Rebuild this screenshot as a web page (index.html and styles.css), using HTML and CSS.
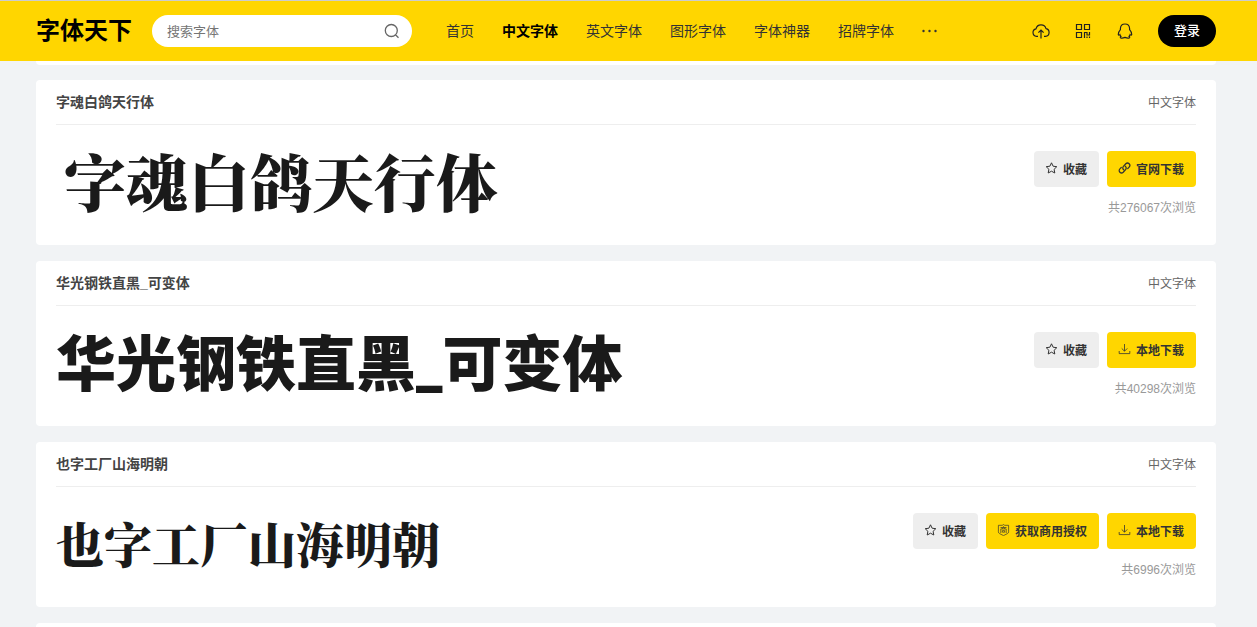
FILE: index.html
```html
<!DOCTYPE html>
<html lang="zh-CN">
<head>
  <meta charset="UTF-8" />
  <meta name="viewport" content="width=device-width, initial-scale=1.0"/>
  <title>中文字体 - 字体天下</title>
  <link rel="stylesheet" href="styles.css">
</head>
<body>

  <svg class="sprite" aria-hidden="true">
    <symbol id="i-star" viewBox="0 0 12 12">
      <path d="M6 .8l1.6 3.4 3.7.5-2.7 2.6.7 3.7L6 9.2 2.7 11l.7-3.7L.7 4.7l3.7-.5z" fill="none" stroke="currentColor" stroke-linejoin="round"/>
    </symbol>
    <symbol id="i-down" viewBox="0 0 12 12">
      <path d="M6 1v7M3.2 5.4L6 8.2l2.8-2.8M.7 8v2.6h10.6V8" fill="none" stroke="currentColor" stroke-width=".8"/>
    </symbol>
    <symbol id="i-link" viewBox="0 0 12 12">
      <g fill="none" stroke="currentColor" stroke-width="1.3" stroke-linecap="round">
        <path d="M5.2 7.8a2.300 2.300 0 0 1-.3-3.400L7.300 1.800a2.300 2.300 0 0 1 3.300 3.300L9.200 6.600"/>
        <path d="M6.800 4.200a2.300 2.300 0 0 1 .3 3.400L4.700 10.200A2.300 2.300 0 0 1 1.400 6.900L2.800 5.400"/>
      </g>
    </symbol>
    <symbol id="i-shield" viewBox="0 0 12 12">
      <g fill="none" stroke="currentColor" stroke-width=".7">
        <path d="M6 .5l1.200.8h3.900v6.500q0 1.300-1.300 1.900L6 11.600 2.200 9.700Q.9 9.100.9 7.800V1.300h3.900z"/>
        <path d="M6 2.200v1.200M3 3.500h6M4.600 3.700l.5 1.100M7.400 3.700l-.5 1.100M3.300 9V4.900h5.400V9M4.900 6.600h2.200v1.600H4.900z"/>
      </g>
    </symbol>
  </svg>

  <header class="header">
    <a href="#" class="logo">字体天下</a>
    <form class="search">
      <input type="text" placeholder="搜索字体" aria-label="搜索字体" />
      <button type="button" aria-label="搜索">
        <svg width="16" height="16" viewBox="0 0 16 16"><path d="M11.500 11.700l3 3M13.300 7.500A6 6 0 1 1 1.300 7.500a6 6 0 0 1 12 0z" fill="none" stroke="currentColor" stroke-width="1.300"/></svg>
      </button>
    </form>
    <nav class="nav">
      <a href="#">首页</a>
      <a href="#" class="on">中文字体</a>
      <a href="#">英文字体</a>
      <a href="#">图形字体</a>
      <a href="#">字体神器</a>
      <a href="#">招牌字体</a>
      <a href="#" aria-label="更多"><svg width="16" height="16" viewBox="0 0 16 16" fill="currentColor"><circle cx="1.500" cy="9" r="1.200"/><circle cx="7.500" cy="9" r="1.200"/><circle cx="13.500" cy="9" r="1.200"/></svg></a>
    </nav>
    <div class="tools">
      <a href="#" aria-label="上传"><svg width="18" height="18" viewBox="0 0 18 18"><path d="M6 14.300H4.500a3.800 3.800 0 0 1-.5-7.500 5.200 5.200 0 0 1 10-.2 3.900 3.900 0 0 1-.5 7.700H12M9 16.500V8.200M6.400 10.700L9 8.100l2.600 2.600"/></svg></a>
      <a href="#" aria-label="二维码"><svg width="18" height="18" viewBox="0 0 18 18"><path d="M2.500 2.500h5v5h-5zM10.500 2.500h5v5h-5zM2.500 10.500h5v5h-5zM10.500 16V10.500H13v2.500h2.500V10M13 16v-1.500M15.500 16v-1.500"/></svg></a>
      <a href="#" aria-label="QQ"><svg width="18" height="18" viewBox="0 0 18 18"><path d="M9 2C6.100 2 4.500 4 4.400 6.600v1.100C3 9.300 2.100 11 2.300 12.500c.2.900.9.700 1.600.1.200.7.600 1.200 1.100 1.700-.8.400-.9 1-.5 1.400.7.500 3 .3 4.500-.3 1.500.6 3.800.8 4.500.3.400-.4.300-1-.5-1.400.5-.5.900-1 1.100-1.700.7.600 1.400.8 1.600-.1.200-1.500-.7-3.200-2.100-4.800V6.600C13.500 4 11.900 2 9 2z"/></svg></a>
      <button type="button" class="btn-login">登录</button>
    </div>
  </header>

  <main class="list">
    <div class="card card-prev"></div>

    <article class="card">
      <div class="card-head">
        <h2><a href="#">字魂白鸽天行体</a></h2>
        <a href="#">中文字体</a>
      </div>
      <div class="card-body">
        <a href="#" class="preview preview-brush">字魂白鸽天行体</a>
        <div class="side">
          <div class="btns">
            <button type="button" class="btn btn-fav"><svg><use href="#i-star"/></svg>收藏</button>
            <button type="button" class="btn"><svg><use href="#i-link"/></svg>官网下载</button>
          </div>
          <p>共276067次浏览</p>
        </div>
      </div>
    </article>

    <article class="card">
      <div class="card-head">
        <h2><a href="#">华光钢铁直黑_可变体</a></h2>
        <a href="#">中文字体</a>
      </div>
      <div class="card-body">
        <a href="#" class="preview preview-steel">华光钢铁直黑_可变体</a>
        <div class="side">
          <div class="btns">
            <button type="button" class="btn btn-fav"><svg><use href="#i-star"/></svg>收藏</button>
            <button type="button" class="btn"><svg><use href="#i-down"/></svg>本地下载</button>
          </div>
          <p>共40298次浏览</p>
        </div>
      </div>
    </article>

    <article class="card">
      <div class="card-head">
        <h2><a href="#">也字工厂山海明朝</a></h2>
        <a href="#">中文字体</a>
      </div>
      <div class="card-body">
        <a href="#" class="preview preview-ming">也字工厂山海明朝</a>
        <div class="side">
          <div class="btns">
            <button type="button" class="btn btn-fav"><svg><use href="#i-star"/></svg>收藏</button>
            <button type="button" class="btn"><svg><use href="#i-shield"/></svg>获取商用授权</button>
            <button type="button" class="btn"><svg><use href="#i-down"/></svg>本地下载</button>
          </div>
          <p>共6996次浏览</p>
        </div>
      </div>
    </article>

    <div class="card card-next"></div>
  </main>

</body>
</html>
```
FILE: styles.css
```css
* {
  box-sizing: border-box;
}
body {
  margin: 0;
  font-family: "Liberation Sans", "Noto Sans CJK SC", sans-serif;
  font-size: 14px;
  background-color: #f1f3f5;
  color: #333;
}
a {
  color: inherit;
  text-decoration: none;
}
h2, p {
  margin: 0;
}
button, input {
  font-family: inherit;
  border: none;
  padding: 0;
}
button {
  cursor: pointer;
}
svg {
  display: block;
  flex: none;
}
.sprite {
  position: absolute;
  width: 0;
  height: 0;
}

.header {
  display: flex;
  align-items: center;
  height: 61px;
  padding: 0 41px 0 36px;
  border-top: 1px solid #ccc;
  background-color: #ffd600;
}
.logo {
  width: 116px;
  font-size: 24px;
  line-height: 32px;
  font-weight: bold;
  color: #000;
  white-space: nowrap;
}
.search {
  display: flex;
  align-items: center;
  width: 260px;
  height: 32px;
  padding: 0 12px 0 15px;
  border-radius: 16px;
  background-color: #fff;
}
.search input {
  flex: 1;
  min-width: 0;
  font-size: 13px;
  background: none;
  outline: none;
}
.search input::placeholder {
  color: #757575;
}
.search button {
  background: none;
  color: #666;
}
.nav {
  display: flex;
  align-items: center;
  gap: 28px;
  margin-left: 34px;
  padding-bottom: 2px;
  white-space: nowrap;
}
.nav .on {
  font-weight: bold;
  color: #000;
}
.tools {
  display: flex;
  align-items: center;
  gap: 24px;
  margin-left: auto;
  color: #222;
}
.tools svg {
  fill: none;
  stroke: currentColor;
  stroke-width: 1.2;
}
.btn-login {
  width: 58px;
  height: 32px;
  padding-bottom: 3px;
  border-radius: 16px;
  font-size: 13px;
  font-weight: 500;
  background-color: #000;
  color: #fff;
}

.list {
  padding: 0 41px 0 36px;
}
.card {
  height: 165px;
  margin-bottom: 16px;
  padding: 0 20px;
  border-radius: 4px;
  background-color: #fff;
}
.card-prev {
  height: 4px;
  margin-bottom: 15px;
  border-radius: 0 0 4px 4px;
}
.card-next {
  height: 4px;
  margin-bottom: 0;
  border-radius: 4px 4px 0 0;
}
.card-head {
  display: flex;
  justify-content: space-between;
  align-items: center;
  height: 45px;
  padding-bottom: 2px;
  border-bottom: 1px solid #eee;
  font-size: 12px;
  color: #666;
}
.card-head h2 {
  font-size: 14px;
  font-weight: bold;
  color: #444;
}
.card-body {
  display: flex;
  justify-content: space-between;
}
.preview {
  height: 120px;
  line-height: 120px;
  font-weight: 900;
  color: #1a1a1a;
  white-space: nowrap;
}
.preview-brush,
.preview-ming {
  font-family: "Noto Serif CJK SC", "Noto Sans CJK SC", serif;
  line-height: 112px;
}
.preview-brush {
  padding-left: 8px;
  font-size: 62px;
}
.preview-steel {
  font-family: Roboto, "Noto Sans CJK SC", sans-serif;
  font-size: 60px;
}
.preview-ming {
  font-size: 48px;
}
.side {
  padding-top: 26px;
  text-align: right;
}
.btns {
  display: flex;
  justify-content: flex-end;
  gap: 8px;
}
.btn {
  display: flex;
  align-items: center;
  gap: 5px;
  height: 36px;
  padding: 0 12px 2px 11px;
  border-radius: 4px;
  font-size: 12px;
  font-weight: bold;
  background-color: #ffd600;
  color: #333;
}
.btn svg {
  width: 13px;
  height: 12px;
}
.btn-fav {
  background-color: #eee;
}
.side p {
  margin-top: 12px;
  font-size: 12px;
  line-height: 18px;
  color: #999;
}
```
